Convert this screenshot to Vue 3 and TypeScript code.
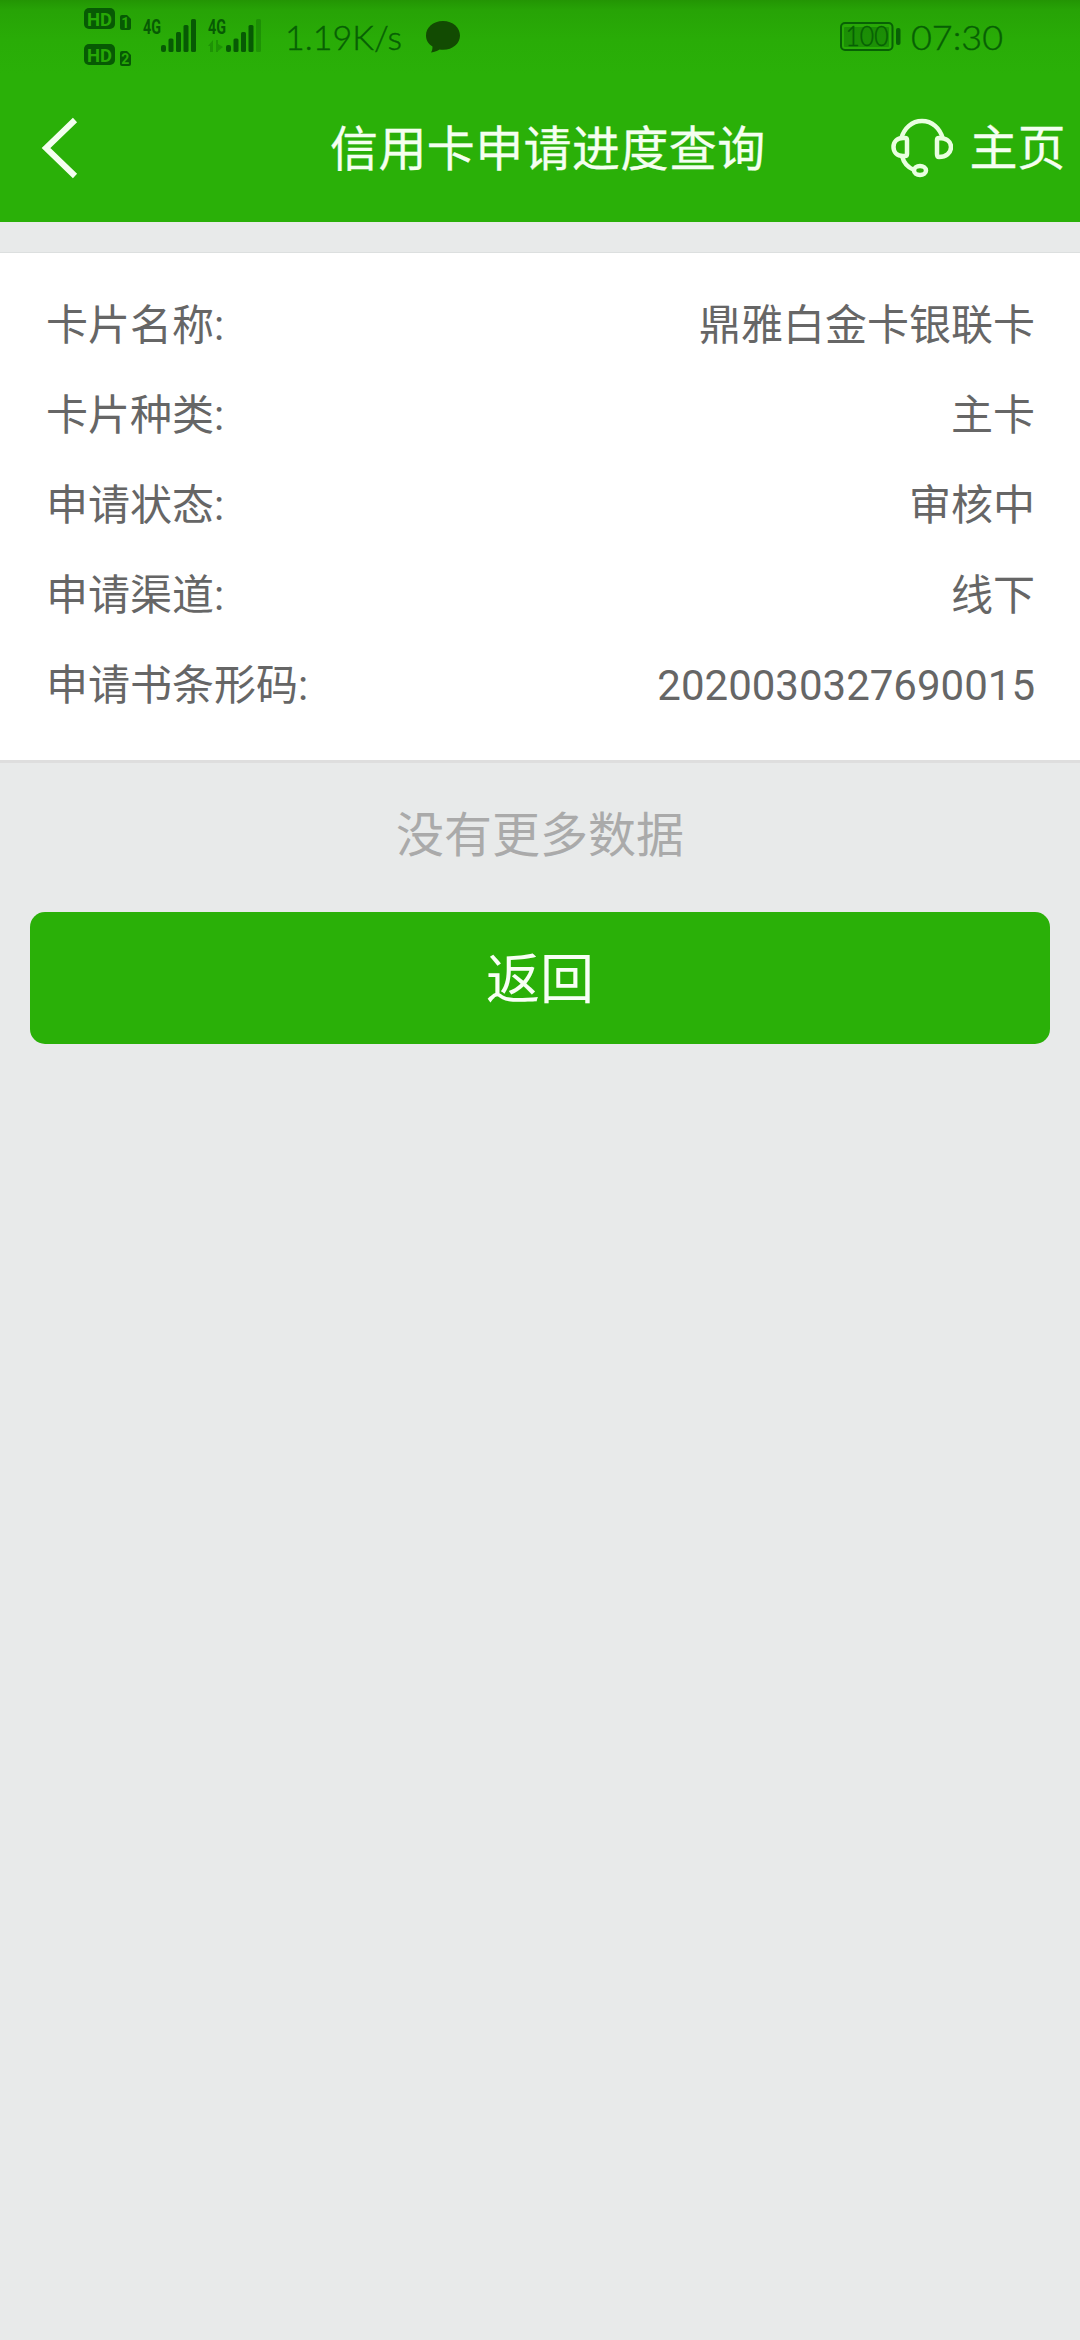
<script setup lang="ts">
interface DetailRow {
  label: string
  value: string
}

const rows: DetailRow[] = [
  { label: '卡片名称:', value: '鼎雅白金卡银联卡' },
  { label: '卡片种类:', value: '主卡' },
  { label: '申请状态:', value: '审核中' },
  { label: '申请渠道:', value: '线下' },
  { label: '申请书条形码:', value: '2020030327690015' },
]
</script>

<template>
  <div class="screen">
    <header class="header">
      <div class="status">
        <svg class="signals" width="180" height="74" viewBox="0 0 180 74" fill="#075a04">
          <g v-for="(n, i) in ['1', '2']" :key="n" :transform="`translate(0 ${i * 36})`">
            <rect x="0" y="8" width="31" height="21" rx="5" />
            <path d="M36 17a2 2 0 0 1 2-2h5l4 4v9a2 2 0 0 1-2 2h-7a2 2 0 0 1-2-2z" />
            <text x="15.5" y="25.7" class="hd" textLength="25" lengthAdjust="spacingAndGlyphs">HD</text>
            <text x="41.3" y="28" class="sim">{{ n }}</text>
          </g>
          <g class="net">
            <text x="59" y="33.5" textLength="18" lengthAdjust="spacingAndGlyphs">4G</text>
            <text x="124" y="33.5" textLength="18" lengthAdjust="spacingAndGlyphs">4G</text>
          </g>
          <g v-for="x in [77, 142]" :key="x" :transform="`translate(${x} 0)`">
            <rect x="0" y="45" width="5" height="7" rx="2" />
            <rect x="7.5" y="38.5" width="5" height="13.5" rx="1.5" />
            <rect x="15" y="32" width="5" height="20" rx="1.5" />
            <rect x="22.5" y="25" width="5" height="27" rx="1.5" />
            <rect x="30" y="19" width="5" height="33" rx="1.5" :opacity="x > 100 ? 0.3 : 1" />
          </g>
          <path d="M124 46l5-6v12h-3v-6zM132 40h2v4l5 3-5 4v1h-2z" opacity=".3" />
        </svg>
        <svg class="speed" width="140" height="74" viewBox="0 0 140 74">
          <text class="thin" x="1" y="49.500" textLength="117" lengthAdjust="spacingAndGlyphs">1.19K/s</text>
        </svg>
        <svg class="bubble" width="36" height="34" viewBox="0 0 36 34" fill="#124b02">
          <path d="M18 1C8 1 1 7.500 1 15.500c0 5 2.500 8.500 6.500 11 0 2.500-.5 4.500-1.500 6 4-.5 6.500-1.800 8.500-3 1.200.2 2.300.3 3.500.3 10 0 17-6.500 17-14.300S28 1 18 1z" />
        </svg>
        <svg class="battery" width="62" height="74" viewBox="0 -22 62 74">
          <rect x="1" y="1" width="51.500" height="27" rx="4" fill="none" stroke="#086105" stroke-width="2" />
          <rect x="4" y="5" width="45" height="20" rx="1" fill="#086105" opacity=".38" />
          <rect x="56" y="6" width="4.500" height="17" rx="2" fill="#086105" />
          <text class="thin level" x="5.500" y="24.300" textLength="43" lengthAdjust="spacingAndGlyphs">100</text>
        </svg>
        <svg class="clock" width="100" height="74" viewBox="0 0 100 74">
          <text class="thin" x="0" y="49.500" textLength="92" lengthAdjust="spacingAndGlyphs">07:30</text>
        </svg>
      </div>
      <nav class="nav">
        <svg class="back" width="40" height="66" viewBox="0 0 40 66" fill="none" stroke="#f4fff0" stroke-width="6">
          <path d="M35 5L6 33l29 28" />
        </svg>
        <h1 class="title">信用卡申请进度查询</h1>
        <div class="home">
          <svg width="62" height="60" viewBox="0 0 62 60" fill="none" stroke="#e9ffe0" stroke-width="4.500">
            <path d="M10 21C13 10 21 3 31 3s18 7 21 18" />
            <path d="M14 20h-2C6 20 2.500 24 2.500 29S6 38 12 38h2c1.500 0 2-1 2-2V22c0-1.500-.8-2-2-2z" />
            <path d="M48 20c-1.500 0-2 .8-2 2v14c0 2 .8 3 2 3 7 0 12-4 12-10s-5-9-12-9z" />
            <path d="M11 38c2 8 7 12 12 14" />
            <ellipse cx="29" cy="52.500" rx="6" ry="4.500" />
          </svg>
          <span>主页</span>
        </div>
      </nav>
    </header>
    <main>
      <dl class="card">
        <div v-for="row in rows" :key="row.label" class="row">
          <dt>{{ row.label }}</dt>
          <dd>{{ row.value }}</dd>
        </div>
      </dl>
      <p class="empty">没有更多数据</p>
      <button class="return" type="button">返回</button>
    </main>
  </div>
</template>

<style>
body {
  margin: 0;
  background: #e8eaea;
}
</style>

<style scoped>
.screen {
  width: 1080px;
  height: 2340px;
  overflow: hidden;
  background: #e8eaea;
  font-family: Roboto, "Noto Sans CJK SC", sans-serif;
}
.header {
  height: 222px;
  background: linear-gradient(#239504 0, #27a306 10px, #29ac07 40px, #2ab008 74px);
}
.status {
  display: flex;
  align-items: flex-start;
  height: 74px;
  padding-left: 84px;
}
.signals {
  margin-right: 20px;
}
.hd {
  font: bold 19px Roboto, sans-serif;
  fill: #27a806;
  text-anchor: middle;
}
.sim {
  font: bold 14px Roboto, sans-serif;
  fill: #27a806;
  text-anchor: middle;
}
.net text {
  font: bold 20px Roboto, sans-serif;
}
.thin {
  font: 300 34px Lato, sans-serif;
  fill: #075f04;
  stroke: #075f04;
  stroke-width: 0.4px;
}
.thin.level {
  font-size: 27px;
}
.bubble {
  margin: 20px 0 0 1px;
}
.battery {
  margin-left: 379px;
}
.clock {
  margin-left: 9px;
}
.nav {
  display: grid;
  grid-template-columns: 330px 1fr 315px;
  align-items: center;
  height: 148px;
  color: #f4fff0;
}
.back {
  margin-left: 40px;
}
.title {
  margin: 0;
  padding-top: 4px;
  font-size: 48px;
  font-weight: 400;
  letter-spacing: 0.4px;
  line-height: 72px;
  white-space: nowrap;
  -webkit-text-stroke: 0.3px #f4fff0;
}
.home {
  display: flex;
  align-items: center;
  margin-left: 125px;
  font-size: 48px;
  line-height: 72px;
  white-space: nowrap;
  -webkit-text-stroke: 0.3px #f4fff0;
}
.home span {
  margin-left: 17px;
  padding-top: 2px;
}
.card {
  margin: 30px 0 0;
  padding: 28px 45px 29px 46px;
  background: #fff;
  border-top: 1px solid #dcdfdf;
  border-bottom: 3px solid #dedede;
  color: #666;
  font-size: 42px;
  line-height: 90px;
}
.row {
  display: flex;
  justify-content: space-between;
}
.row dd {
  margin: 0;
}
.empty {
  margin: 0;
  padding: 37px 0 40px;
  color: #aaa;
  font-size: 48px;
  line-height: 72px;
  text-align: center;
}
.return {
  display: block;
  width: 1020px;
  height: 132px;
  margin: 0 auto;
  padding: 0 0 6px;
  border: 0;
  border-radius: 15px;
  background: #2ab008;
  color: #f8fff5;
  font: inherit;
  font-size: 54px;
}
</style>
